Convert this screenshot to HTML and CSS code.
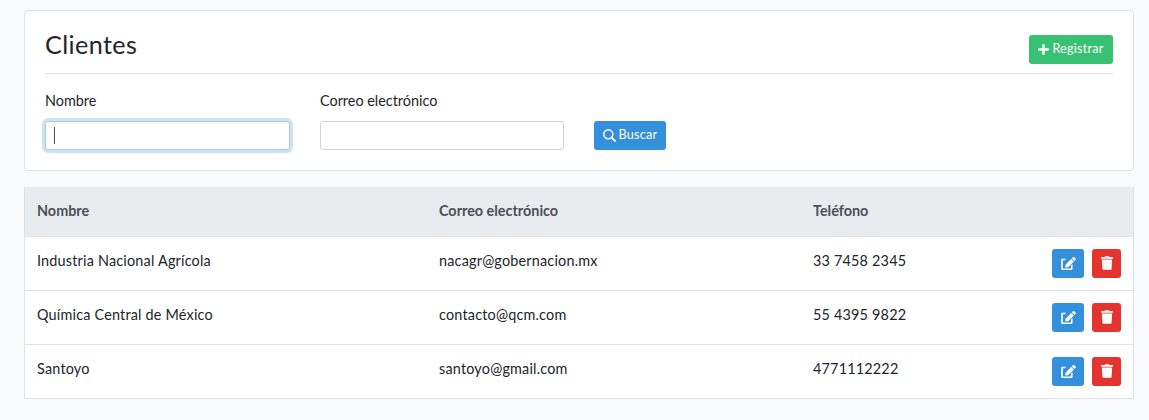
FILE: index.html
```html
<!DOCTYPE html>
<html lang="es">
<head>
<meta charset="utf-8">
<title>Clientes</title>
<link rel="stylesheet" href="styles.css">
</head>
<body>
<main class="page">
  <section class="card">
    <header class="card-head">
      <h3 class="title">Clientes</h3>
      <button class="btn btn-green"><svg class="ico ico-plus" viewBox="0 0 448 512"><path d="M416 208H272V64c0-17.67-14.33-32-32-32h-32c-17.67 0-32 14.33-32 32v144H32c-17.67 0-32 14.33-32 32v32c0 17.67 14.33 32 32 32h144v144c0 17.67 14.33 32 32 32h32c17.67 0 32-14.33 32-32V304h144c17.67 0 32-14.33 32-32v-32c0-17.67-14.33-32-32-32z"/></svg>Registrar</button>
    </header>
    <form class="filters">
      <div class="field field-name">
        <label class="label" for="n">Nombre</label>
        <div class="input-wrap">
          <input class="input input-focus" id="n" type="text">
          <span class="caret"></span>
        </div>
      </div>
      <div class="field field-mail">
        <label class="label" for="c">Correo electrónico</label>
        <input class="input" id="c" type="text">
      </div>
      <button class="btn btn-blue btn-search" type="button"><svg class="ico ico-search" viewBox="0 0 512 512"><circle class="lens" cx="208" cy="208" r="178"/><path class="lens-handle" d="M340 340L470 470"/></svg>Buscar</button>
    </form>
  </section>
  <table class="table">
    <thead>
      <tr><th class="c1">Nombre</th><th class="c2">Correo electrónico</th><th class="c3">Teléfono</th><th></th></tr>
    </thead>
    <tbody>
      <tr><td>Industria Nacional Agrícola</td><td>nacagr@gobernacion.mx</td><td>33 7458 2345</td><td class="actions"><div class="acts"><button class="btn btn-blue btn-act"><svg class="ico ico-edit" viewBox="0 0 576 512"><use href="#e"/></svg></button><button class="btn btn-red btn-act btn-del"><svg class="ico ico-trash" viewBox="0 0 448 512"><use href="#t"/></svg></button></div></td></tr>
      <tr><td>Química Central de México</td><td>contacto@qcm.com</td><td>55 4395 9822</td><td class="actions"><div class="acts"><button class="btn btn-blue btn-act"><svg class="ico ico-edit" viewBox="0 0 576 512"><use href="#e"/></svg></button><button class="btn btn-red btn-act btn-del"><svg class="ico ico-trash" viewBox="0 0 448 512"><use href="#t"/></svg></button></div></td></tr>
      <tr><td>Santoyo</td><td>santoyo@gmail.com</td><td>4771112222</td><td class="actions"><div class="acts"><button class="btn btn-blue btn-act"><svg class="ico ico-edit" viewBox="0 0 576 512"><use href="#e"/></svg></button><button class="btn btn-red btn-act btn-del"><svg class="ico ico-trash" viewBox="0 0 448 512"><use href="#t"/></svg></button></div></td></tr>
    </tbody>
  </table>
</main>
<svg class="defs" width="0" height="0">
  <defs>
    <path id="e" d="M402.6 83.2l90.2 90.2c3.8 3.8 3.8 10 0 13.8L274.4 405.6l-92.8 10.3c-12.4 1.4-22.9-9.1-21.5-21.5l10.3-92.8L388.8 83.2c3.8-3.8 10-3.8 13.8 0zm162-22.9l-48.8-48.8c-15.2-15.2-39.9-15.2-55.2 0l-35.4 35.4c-3.8 3.8-3.8 10 0 13.8l90.2 90.2c3.8 3.8 10 3.8 13.8 0l35.4-35.4c15.2-15.3 15.2-40 0-55.2zM384 346.2V448H64V128h73.1c3.2 0 6.2-1.3 8.5-3.5l40-40c7.6-7.6 2.2-20.5-8.5-20.5H48C21.5 64 0 85.5 0 112v352c0 26.5 21.5 48 48 48h352c26.5 0 48-21.5 48-48V306.2c0-10.7-12.9-16-20.5-8.5l-40 40c-2.2 2.3-3.5 5.3-3.5 8.5z"/>
    <path id="t" d="M432 32H312l-9.4-18.7A24 24 0 0 0 281.1 0H166.8a23.72 23.72 0 0 0-21.4 13.3L136 32H16A16 16 0 0 0 0 48v32a16 16 0 0 0 16 16h416a16 16 0 0 0 16-16V48a16 16 0 0 0-16-16zM53.2 467a48 48 0 0 0 47.9 45h245.8a48 48 0 0 0 47.9-45L416 128H32z"/>
  </defs>
</svg>
</body>
</html>
```
FILE: styles.css
```css
* { box-sizing: border-box; }
html, body { margin: 0; }
body {
  background: #f8fafc;
  color: #212529;
  font-family: "Lato", "Noto Sans", sans-serif;
  font-size: 14.4px;
  letter-spacing: .2px;
  line-height: 1.6;
  overflow: hidden;
}
.page { padding: 10px 15px 0 24px; }
.card {
  background: #fff;
  border: 1px solid #dfe0e1;
  border-radius: 4px;
  padding: 20px;
  height: 161px;
  margin-bottom: 16px;
}
.card-head {
  display: flex;
  justify-content: space-between;
  align-items: flex-end;
  height: 43px;
  border-bottom: 1px solid #e5e5e5;
  padding-bottom: 9px;
}
.title {
  margin: 0 0 5px;
  font-size: 25.2px;
  font-weight: 400;
  letter-spacing: .4px;
  line-height: 30px;
}
.btn {
  border: 1px solid transparent;
  border-radius: 3px;
  color: #fff;
  font: inherit;
  font-size: 12.6px;
  letter-spacing: .25px;
  line-height: 1.5;
  padding: 0;
  display: inline-flex;
  align-items: center;
  justify-content: center;
  height: 29px;
}
.btn-green { background: #38c172; width: 84px; }
.btn-blue { background: #3490dc; }
.btn-red { background: #e3342f; }
.btn-search { width: 72px; }
.ico { fill: #fff; display: block; }
.ico-plus { width: 11px; height: 13px; margin-right: 3px; }
.ico-search { width: 13px; height: 13px; margin-right: 3px; }
.lens, .lens-handle { fill: none; stroke: #fff; stroke-width: 60; }
.lens-handle { stroke-width: 76; stroke-linecap: round; }
.filters {
  display: flex;
  align-items: flex-end;
  margin-top: 15px;
}
.field { display: flex; flex-direction: column; }
.field-name { width: 245px; margin-right: 30px; }
.field-mail { width: 244px; margin-right: 30px; }
.label { letter-spacing: 0; line-height: 23px; margin-bottom: 9px; }
.input-wrap { position: relative; }
.input {
  display: block;
  height: 29px;
  width: 100%;
  border: 1px solid #ced4da;
  border-radius: 3px;
  padding: 0 8px;
  font: inherit;
  color: #495057;
  background: #fff;
  outline: 0;
}
.input-focus { border-color: #a1cbef; box-shadow: 0 0 0 3px rgba(52,144,220,.25); }
.caret {
  position: absolute;
  left: 9px;
  top: 6px;
  width: 1px;
  height: 17px;
  background: #495057;
}
.table {
  width: 1110px;
  border-collapse: collapse;
  table-layout: fixed;
  background: #fff;
  border: 1px solid #dee2e6;
  border-top: 0;
}
.table th, .table td { padding: 12px; text-align: left; vertical-align: top; }
.table thead tr { background: #e9ecef; color: #495057; }
.table th { font-weight: 700; height: 49px; letter-spacing: 0; line-height: 23px; }
.table td { height: 54px; border-top: 1px solid #dee2e6; }
.c1 { width: 402.5px; }
.c2 { width: 374px; }
.c3 { width: 200px; }
.acts { display: flex; justify-content: flex-end; gap: 8px; }
.btn-act { width: 32px; }
.btn-del { width: 29px; }
.ico-edit { width: 15px; height: 13px; }
.ico-trash { width: 12px; height: 14px; }
.defs { position: absolute; }
```
